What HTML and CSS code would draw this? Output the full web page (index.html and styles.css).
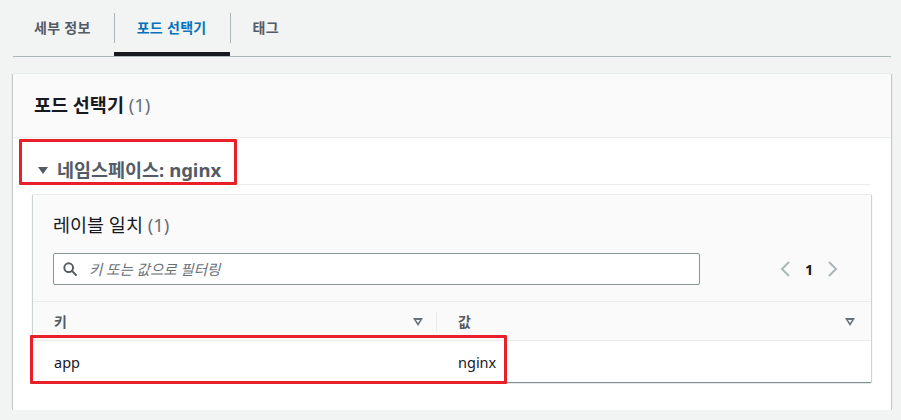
FILE: index.html
```html
<!DOCTYPE html>
<html lang="ko">
<head>
<meta charset="UTF-8" />
<meta name="viewport" content="width=device-width, initial-scale=1" />
<title>포드 선택기</title>
<link rel="stylesheet" href="styles.css">
</head>
<body>

<div class="tabs">
  <div class="tab">세부 정보</div>
  <div class="tab active">포드 선택기</div>
  <div class="tab">태그</div>
</div>

<div class="card">
  <div class="card-header">
    <h2>포드 선택기 <span class="count">(1)</span></h2>
  </div>

  <div class="card-body">
    <div class="section">
      <div class="section-title">
        <span class="caret"></span>
        <span>네임스페이스: nginx</span>
      </div>

      <div class="panel">
        <div class="panel-header">
          <h3>레이블 일치 <span class="count">(1)</span></h3>
          <div class="tools">
            <label class="search">
              <svg width="14" height="14" viewBox="0 0 16 16" fill="none" stroke="#545b64" stroke-width="2.2">
                <circle cx="6.5" cy="6.5" r="5"/>
                <path d="M10.2 10.2 L14.8 14.8" stroke-linecap="round"/>
              </svg>
              <input type="text" placeholder="키 또는 값으로 필터링" />
            </label>
            <div class="pager">
              <svg width="12" height="16" viewBox="0 0 12 16" fill="none" stroke="#aab7b8" stroke-width="2"><path d="M10 1 L3 8 L10 15"/></svg>
              <span class="page">1</span>
              <svg width="12" height="16" viewBox="0 0 12 16" fill="none" stroke="#aab7b8" stroke-width="2"><path d="M2 1 L9 8 L2 15"/></svg>
            </div>
          </div>
        </div>

        <table class="labels">
          <thead>
            <tr>
              <th class="col-key"><span>키</span><span class="sort"></span></th>
              <th class="col-val"><span>값</span><span class="sort"></span></th>
            </tr>
          </thead>
          <tbody>
            <tr>
              <td>app</td>
              <td>nginx</td>
            </tr>
          </tbody>
        </table>
      </div>
    </div>
  </div>

  <!-- 강조 표시 -->
  <div class="mark mark-ns"></div>
  <div class="mark mark-row"></div>
</div>

</body>
</html>
```

FILE: styles.css
```css
body {
  margin: 0;
  background: #f2f3f3;
  color: #16191f;
  font-family: "Noto Sans", "Noto Sans CJK KR", sans-serif;
  font-size: 14px;
  padding: 0 10px 0 13px;
}
.tabs {
  display: flex;
  height: 56px;
  border-bottom: 1px solid #aab7b8;
  align-items: stretch;
}
.tab {
  position: relative;
  display: flex;
  align-items: center;
  padding: 0 23px 2px 23px;
  font-weight: bold;
  color: #545b64;
  letter-spacing: 0.3px;
}
.tab + .tab::before {
  content: "";
  position: absolute;
  left: 0;
  top: 13px;
  height: 30px;
  border-left: 1px solid #aab7b8;
}
.tab:first-child {
  padding-left: 21px;
}
.tab.active {
  color: #0073bb;
  box-shadow: inset 0 -4px 0 #16191f;
}
.card {
  position: relative;
  margin-top: 16px;
  background: #fff;
  box-shadow: 0 1px 1px 0 rgba(0, 28, 36, .3), 1px 1px 1px 0 rgba(0, 28, 36, .15), -1px 1px 1px 0 rgba(0, 28, 36, .15);
  border-top: 1px solid #eaeded;
  padding-bottom: 28px;
}
.card-header {
  background: #fafafa;
  border-bottom: 1px solid #eaeded;
  display: flex;
  align-items: center;
  padding: 0 0 4px 21px;
  box-sizing: border-box;
  height: 64px;
}
h2, h3 {
  margin: 0;
  font-size: 18.5px;
}
h2 {
  font-weight: bold;
}
h3 {
  font-weight: normal;
}
.count {
  color: #687078;
  font-weight: normal;
}
.section {
  margin: 0 20px 0 6px;
}
.section-title {
  height: 47px;
  border-bottom: 1px solid #eaeded;
  display: flex;
  align-items: center;
  padding: 16px 0 0 19px;
  box-sizing: border-box;
  font-size: 18.5px;
  font-weight: bold;
  color: #545b64;
}
.caret {
  width: 0;
  height: 0;
  border-left: 5px solid transparent;
  border-right: 5px solid transparent;
  border-top: 7px solid #545b64;
  margin-right: 9px;
  margin-top: 3px;
}
.panel {
  margin: 9px 0 0 14px;
  background: #fff;
  box-shadow: 0 1px 1px 0 rgba(0, 28, 36, .3), 1px 1px 1px 0 rgba(0, 28, 36, .15), -1px 1px 1px 0 rgba(0, 28, 36, .15);
  border-top: 1px solid #eaeded;
}
.panel-header {
  background: #fafafa;
  padding: 16px 0 16px 20px;
}
.tools {
  display: flex;
  align-items: center;
  margin-top: 16px;
}
.search {
  display: flex;
  align-items: center;
  width: 647px;
  height: 32px;
  box-sizing: border-box;
  border: 1px solid #879596;
  border-radius: 2px;
  background: #fff;
  padding-left: 9px;
}
.search input {
  border: none;
  outline: none;
  flex: 1;
  margin-left: 10px;
  font-family: inherit;
  font-size: 14.5px;
  font-style: italic;
  background: transparent;
}
.search input::placeholder {
  color: #687078;
}
.pager {
  display: flex;
  align-items: center;
  margin-left: 79px;
  gap: 14px;
}
.page {
  font-weight: bold;
  font-size: 14.5px;
}
.labels {
  width: 100%;
  border-collapse: collapse;
}
.labels th {
  position: relative;
  background: #fafafa;
  border-top: 1px solid #eaeded;
  border-bottom: 1px solid #eaeded;
  height: 38px;
  font-weight: bold;
  text-align: left;
  color: #545b64;
  padding: 0;
}
.labels th span:first-child {
  padding-left: 21px;
}
.labels .col-key {
  width: 404px;
}
.labels .col-key::after {
  content: "";
  position: absolute;
  right: 0;
  top: 10px;
  height: 20px;
  border-right: 1px solid #eaeded;
}
.sort {
  position: absolute;
  right: 14px;
  top: 16px;
  width: 0;
  height: 0;
  border-left: 5px solid transparent;
  border-right: 5px solid transparent;
  border-top: 8px solid #687078;
}
.sort::after {
  content: "";
  position: absolute;
  left: -2px;
  top: -6px;
  border-left: 2px solid transparent;
  border-right: 2px solid transparent;
  border-top: 3px solid #fafafa;
}
.col-val .sort {
  right: 16px;
}
.labels td {
  height: 41px;
  padding: 0 0 0 21px;
  color: #16191f;
  font-size: 14.5px;
}
.mark {
  position: absolute;
  border: 3px solid #e8202a;
  border-radius: 1px;
}
.mark-ns {
  left: 6px;
  top: 65px;
  width: 212px;
  height: 40px;
}
.mark-row {
  left: 17px;
  top: 261px;
  width: 471px;
  height: 43px;
}
```
